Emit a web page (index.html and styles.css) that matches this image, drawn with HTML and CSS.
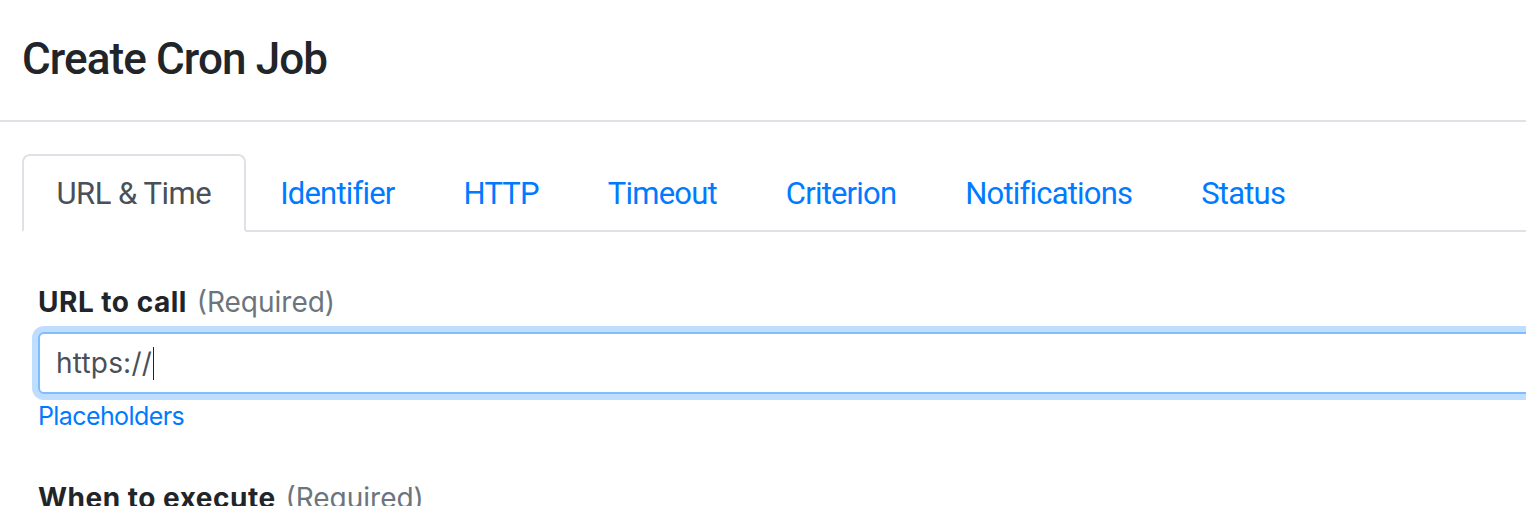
FILE: index.html
```html
<!DOCTYPE html>
<html lang="en">
<head>
<meta charset="utf-8">
<title>Create Cron Job</title>
<link rel="stylesheet" href="styles.css">
</head>
<body>
<div class="modal">
  <div class="modal-header">
    <h5 class="modal-title">Create Cron Job</h5>
  </div>
  <div class="modal-body">
    <ul class="nav-tabs">
      <li><a class="nav-link active" href="#">URL &amp; Time</a></li>
      <li><a class="nav-link" href="#">Identifier</a></li>
      <li><a class="nav-link" href="#">HTTP</a></li>
      <li><a class="nav-link" href="#">Timeout</a></li>
      <li><a class="nav-link" href="#">Criterion</a></li>
      <li><a class="nav-link" href="#">Notifications</a></li>
      <li><a class="nav-link" href="#">Status</a></li>
    </ul>
    <div class="tab-content">
      <div class="form-group">
        <label class="form-label"><span class="strong">URL to call</span> <span class="muted">(Required)</span></label>
        <div class="form-control focused"><span class="value">https://</span><span class="caret"></span></div>
        <a class="form-text" href="#">Placeholders</a>
      </div>
      <div class="form-group">
        <label class="form-label"><span class="strong">When to execute</span> <span class="muted">(Required)</span></label>
      </div>
    </div>
  </div>
</div>
</body>
</html>
```
FILE: styles.css
```css
html, body {
  margin: 0;
  padding: 0;
  background: #fff;
  overflow: hidden;
}
body {
  font-family: Inter, "Noto Sans", sans-serif;
  color: #212529;
}
.modal {
  width: 1700px;
}
.modal-header {
  padding: 33px 20px 35px 22px;
  border-bottom: 2px solid #dee2e6;
}
.modal-title {
  margin: 0;
  font-family: Roboto, Inter, sans-serif;
  font-size: 44px;
  line-height: 52px;
  font-weight: 500;
  letter-spacing: -0.9px;
  color: #212529;
}
.modal-body {
  padding: 32px 0 0 22px;
}
.nav-tabs {
  display: flex;
  margin: 0;
  padding: 0;
  list-style: none;
  border-bottom: 2px solid #dee2e6;
}
.nav-link {
  display: block;
  margin-bottom: -2px;
  padding: 14px 32.5px 12px;
  border: 2px solid transparent;
  border-radius: 8px 8px 0 0;
  font-family: Roboto, Inter, sans-serif;
  font-size: 31px;
  line-height: 48px;
  letter-spacing: -0.8px;
  color: #007bff;
  text-decoration: none;
}
.nav-link.active {
  letter-spacing: -0.5px;
  color: #495057;
  background: #fff;
  border-color: #dee2e6 #dee2e6 #fff;
}
.tab-content {
  padding: 49px 0 0 16px;
}
.form-group {
  margin-bottom: 41px;
}
.form-label {
  display: block;
  margin-bottom: 9px;
  font-size: 28px;
  line-height: 42px;
  color: #212529;
}
.strong {
  font-weight: 700;
  letter-spacing: 0.5px;
}
.muted {
  margin-left: 2px;
  font-weight: 400;
  color: #6c757d;
}
.form-control {
  display: flex;
  align-items: center;
  height: 62px;
  box-sizing: border-box;
  padding: 0 16px;
  border: 2px solid #ced4da;
  border-radius: 6px;
  font-size: 28px;
  color: #495057;
  background: #fff;
}
.form-control.focused {
  border-color: #80bdff;
  box-shadow: 0 0 0 6px rgba(0, 123, 255, 0.25);
}
.value {
  letter-spacing: 0.2px;
}
.caret {
  display: inline-block;
  width: 1.5px;
  height: 33px;
  margin-left: 1px;
  background: #222;
}
.form-text {
  display: block;
  margin-top: 4px;
  font-size: 25px;
  line-height: 37.5px;
  letter-spacing: -0.6px;
  color: #007bff;
  text-decoration: none;
}
```
